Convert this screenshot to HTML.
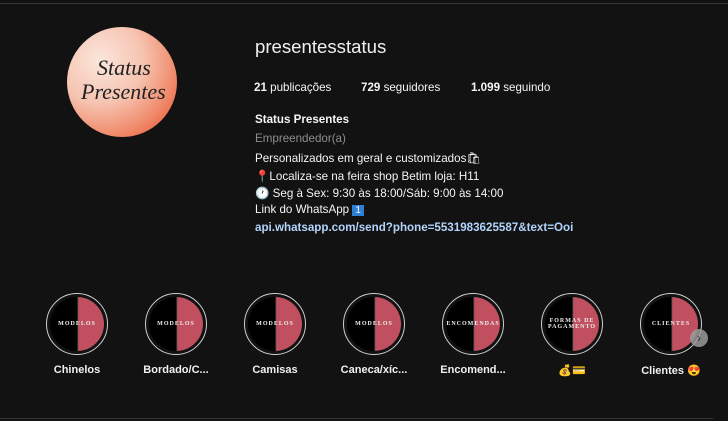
<!DOCTYPE html>
<html><head><meta charset="utf-8"><style>
body{margin:0;width:728px;height:421px;background:#121212;color:#f5f5f5;font-family:"Liberation Sans","Noto Sans CJK JP",sans-serif;overflow:hidden;position:relative}
.topline{position:absolute;left:0;top:3px;width:728px;height:1px;background:#363636}
.botline{position:absolute;left:0;top:418px;width:713px;height:1px;background:#363636}
.av{position:absolute;left:67px;top:27px;width:110px;height:110px;border-radius:50%;background:radial-gradient(circle at 30% 30%,#fbe6dc,#f6c3b0 40%,#f08a6a 70%,#e8502e 95%);overflow:hidden}
.av span{position:absolute;font-family:"Liberation Serif",serif;font-style:italic;color:#222;font-size:22px}
.t{position:absolute;white-space:nowrap}
.user{left:255px;top:36px;font-size:18.6px;font-weight:300;color:#f0f0f0}
.st{top:81px;font-size:11.6px}
.st b{font-weight:bold}
.bio{left:255px;font-size:11.6px}
.hl{position:absolute;top:293px;width:62px;height:62px;border-radius:50%;border:1px solid #cfcfcf;box-sizing:border-box;padding:3px}
.hl div{width:100%;height:100%;border-radius:50%;background:linear-gradient(90deg,#000 50%,#1a3a30 51%,#c0505f 53%,#c0505f);display:flex;align-items:center;justify-content:center;color:#eee;font-family:"Liberation Serif",serif;font-weight:bold;font-size:6px;letter-spacing:1px;text-align:center}
.lb{position:absolute;top:364px;width:100px;text-align:center;font-size:11px;font-weight:bold;color:#f0f0f0}
</style></head><body>
<div class="topline"></div><div class="botline"></div>
<div class="av"><span style="left:30px;top:28px;font-size:22px">Status</span><span style="left:14px;top:52px;font-size:22px">Presentes</span></div>
<div class="t user">presentesstatus</div>
<div class="t st" style="left:254px"><b>21</b> publicações</div>
<div class="t st" style="left:361px"><b>729</b> seguidores</div>
<div class="t st" style="left:471px"><b>1.099</b> seguindo</div>
<div class="t bio" style="top:113px;font-weight:bold">Status Presentes</div>
<div class="t bio" style="top:132px;color:#8e8e8e">Empreendedor(a)</div>
<div class="t bio" style="top:151px">Personalizados em geral e customizados🛍</div>
<div class="t bio" style="top:169px">📍Localiza-se na feira shop Betim loja: H11</div>
<div class="t bio" style="top:186px">🕐 Seg à Sex: 9:30 às 18:00/Sáb: 9:00 às 14:00</div>
<div class="t bio" style="top:203px">Link do WhatsApp <span style="background:#2f7fd6;color:#fff;font-size:10px;padding:0 3px">1</span></div>
<div class="t bio" style="top:221px;color:#b3d4fc;font-weight:bold">api.whatsapp.com/send?phone=5531983625587&amp;text=Ooi</div>

<div class="hl" style="left:46px"><div>MODELOS</div></div>
<div class="hl" style="left:145px"><div>MODELOS</div></div>
<div class="hl" style="left:244px"><div>MODELOS</div></div>
<div class="hl" style="left:343px"><div>MODELOS</div></div>
<div class="hl" style="left:442px"><div>ENCOMENDAS</div></div>
<div class="hl" style="left:541px"><div>FORMAS DE<br>PAGAMENTO</div></div>
<div class="hl" style="left:640px"><div>CLIENTES</div></div>
<div style="position:absolute;left:690px;top:329px;width:18px;height:18px;border-radius:50%;background:#9a9a9a;opacity:.85;color:#333;font-size:12px;text-align:center;line-height:18px">›</div>
<div class="lb" style="left:27px">Chinelos</div>
<div class="lb" style="left:126px">Bordado/C...</div>
<div class="lb" style="left:225px">Camisas</div>
<div class="lb" style="left:324px">Caneca/xíc...</div>
<div class="lb" style="left:423px">Encomend...</div>
<div class="lb" style="left:522px">💰💳</div>
<div class="lb" style="left:621px">Clientes 😍</div>
</body></html>
